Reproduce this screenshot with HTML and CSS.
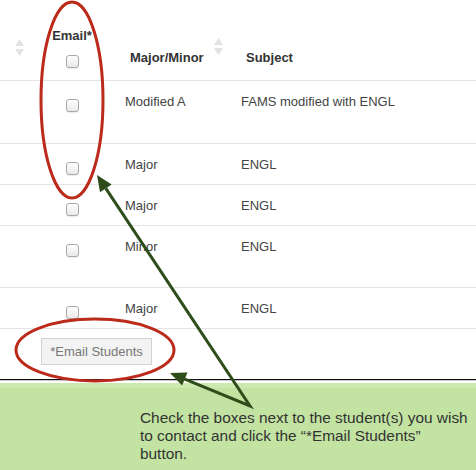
FILE: index.html
```html
<!DOCTYPE html>
<html>
<head>
<meta charset="utf-8">
<link rel="stylesheet" href="styles.css">
</head>
<body>
<div class="page">
  <div class="row head">
    <div class="cell c0"><svg class="sort" width="9" height="17" viewBox="0 0 9 17"><polygon points="0,7 4.5,0 9,7"/><polygon points="0,10 9,10 4.5,17"/></svg></div>
    <div class="cell c1 email-head"><span class="hlabel">Email*</span><input type="checkbox" class="cb"></div>
    <div class="cell c2 major-head"><span class="hlabel">Major/Minor</span><svg class="sort" width="9" height="17" viewBox="0 0 9 17"><polygon points="0,7 4.5,0 9,7"/><polygon points="0,10 9,10 4.5,17"/></svg></div>
    <div class="cell c3 subject-head"><span class="hlabel">Subject</span></div>
  </div>
  <div class="row tall">
    <div class="cell c0"></div>
    <div class="cell c1"><input type="checkbox" class="cb"></div>
    <div class="cell c2 txt">Modified A</div>
    <div class="cell c3 txt">FAMS modified with ENGL</div>
  </div>
  <div class="row short">
    <div class="cell c0"></div>
    <div class="cell c1"><input type="checkbox" class="cb"></div>
    <div class="cell c2 txt">Major</div>
    <div class="cell c3 txt">ENGL</div>
  </div>
  <div class="row short">
    <div class="cell c0"></div>
    <div class="cell c1"><input type="checkbox" class="cb"></div>
    <div class="cell c2 txt">Major</div>
    <div class="cell c3 txt">ENGL</div>
  </div>
  <div class="row tall2">
    <div class="cell c0"></div>
    <div class="cell c1"><input type="checkbox" class="cb"></div>
    <div class="cell c2 txt">Minor</div>
    <div class="cell c3 txt">ENGL</div>
  </div>
  <div class="row short">
    <div class="cell c0"></div>
    <div class="cell c1"><input type="checkbox" class="cb"></div>
    <div class="cell c2 txt">Major</div>
    <div class="cell c3 txt">ENGL</div>
  </div>
  <div class="btnrow"><button class="btn">*Email Students</button></div>
  <div class="rule"></div>
  <div class="rule2"></div>
  <div class="note"><p class="notetext">Check the boxes next to the student(s) you wish to contact and click the “*Email Students” button.</p></div>

  <svg class="overlay" width="476" height="470" viewBox="0 0 476 470">
    <ellipse cx="72" cy="100" rx="31" ry="98" fill="none" stroke="#bb2a1a" stroke-width="3"/>
    <ellipse cx="95" cy="350" rx="79" ry="31" fill="none" stroke="#bb2a1a" stroke-width="3"/>
    <path d="M105.8,188.3 L250,406 L184.8,379.1" fill="none" stroke="#2e4d1b" stroke-width="3" stroke-linejoin="miter" stroke-miterlimit="20"/>
    <polygon points="97,175 111.6,184.4 100,192.2" fill="#2e4d1b"/>
    <polygon points="170,373 187.5,372.6 182.1,385.6" fill="#2e4d1b"/>
  </svg>
</div>
</body>
</html>
```

FILE: styles.css
```css
html, body {
  margin: 0;
  padding: 0;
  background: #fff;
}
.page {
  position: relative;
  width: 476px;
  height: 470px;
  overflow: hidden;
  font-family: "Liberation Sans", Arial, sans-serif;
  font-size: 13px;
  color: #444;
}
.row {
  display: grid;
  grid-template-columns: 40px 64px 129px 1fr;
  box-sizing: border-box;
  border-bottom: 1px solid #e4e4e4;
}
.head { height: 81px; }
.tall { height: 63px; }
.tall2 { height: 62px; }
.short { height: 41px; }
.cell {
  display: flex;
  align-items: flex-start;
}
.c1 { justify-content: center; }
.txt {
  line-height: 16px;
  padding-top: 13px;
}
.c2.txt { padding-left: 21px; }
.c3.txt { padding-left: 8px; }
.hlabel {
  font-weight: bold;
  color: #333;
  line-height: 16px;
}
.c0 .sort { margin: 39px 0 0 15px; }
.sort polygon { fill: #e2e2e2; }
.email-head {
  flex-direction: column;
  justify-content: flex-start;
  align-items: center;
  padding-top: 28px;
}
.major-head {
  justify-content: space-between;
  padding-left: 26px;
  padding-right: 10px;
}
.major-head .hlabel { margin-top: 50px; }
.major-head .sort { margin-top: 38px; }
.subject-head { padding-left: 13px; }
.subject-head .hlabel { margin-top: 50px; }
.cb {
  -webkit-appearance: none;
  appearance: none;
  box-sizing: border-box;
  width: 13px;
  height: 13px;
  margin: 18px 0 0 0;
  border: 1px solid #a9a9a9;
  border-radius: 3px;
  background: linear-gradient(#ffffff, #e9e9e9);
  box-shadow: 0 1px 1px rgba(0,0,0,0.08);
}
.email-head .cb { margin-top: 11px; }
.btnrow {
  height: 50px;
  box-sizing: border-box;
  padding: 9px 0 0 41px;
}
.btn {
  width: 111px;
  height: 27px;
  box-sizing: border-box;
  border: 1px solid #d2d2d2;
  background: #f3f3f3;
  color: #777;
  font-family: "Liberation Sans", Arial, sans-serif;
  font-size: 13px;
  padding: 0;
  border-radius: 0;
}
.rule {
  height: 1px;
  background: #111;
}
.rule2 {
  height: 1px;
  background: #c8c8c8;
  margin-bottom: 2px;
}
.note {
  height: 87px;
  box-sizing: border-box;
  background: linear-gradient(#cce9b0 0, #cce9b0 5px, #c2e3a1 5px);
  padding: 26px 0 0 140px;
}
.notetext {
  margin: 0;
  width: 329px;
  font-size: 15.4px;
  line-height: 18px;
  color: #333;
}
.overlay {
  position: absolute;
  top: 0;
  left: 0;
  pointer-events: none;
}
```
